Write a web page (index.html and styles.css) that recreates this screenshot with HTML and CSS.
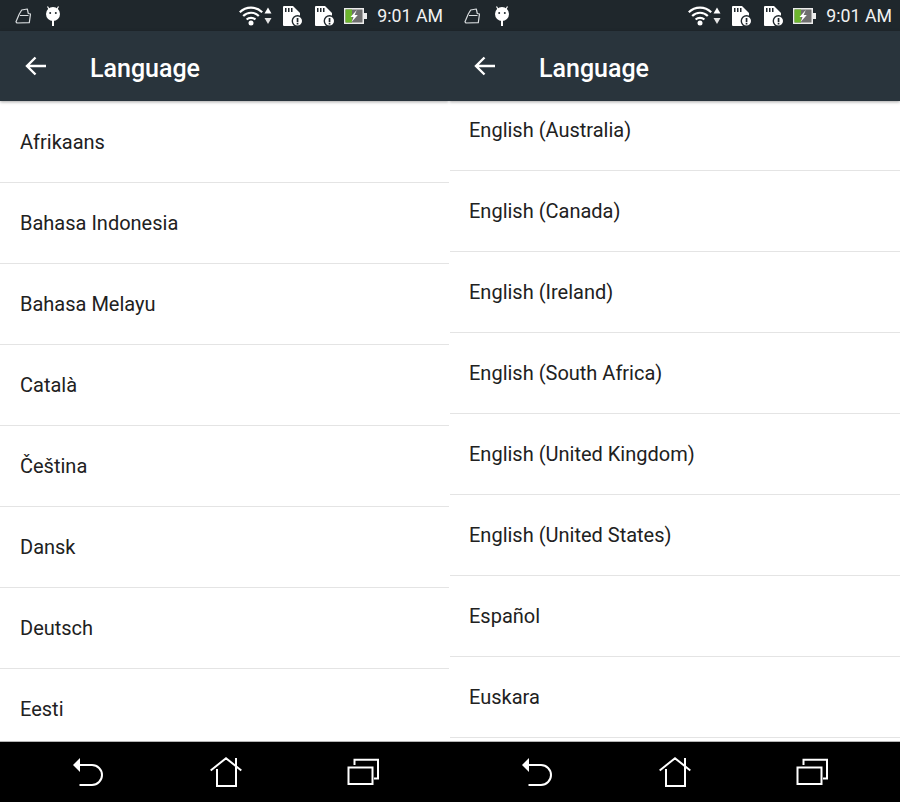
FILE: index.html
```html
<!DOCTYPE html>
<html lang="en">
<head>
    <meta charset="UTF-8">
    <meta name="viewport" content="width=device-width, initial-scale=1.0">
    <title>Language</title>
    <link rel="stylesheet" href="styles.css">
</head>

<body>
    <svg class="sprites" xmlns="http://www.w3.org/2000/svg">
        <symbol id="i-bag" viewBox="0 0 16 16">
            <path d="M1 13.8 4.3 6 6.7 2 12.3 1 13.3 5.5 15.5 6 14.3 14.7 2 15Z M5 7.5H13.5" fill="none" stroke="#d8dcde" stroke-width="1.2" stroke-linejoin="round"/>
        </symbol>
        <symbol id="i-android" viewBox="0 0 16 22">
            <path d="M2.5 1.5 4.5 5M13.5 1.5 11.5 5" stroke="#fff" stroke-width="1.2"/>
            <circle cx="8" cy="9" r="7" fill="#fff"/>
            <circle cx="5.2" cy="8" r="1" fill="#1f272c"/>
            <circle cx="10.8" cy="8" r="1" fill="#1f272c"/>
            <rect x="7" y="15" width="2" height="6" fill="#fff"/>
        </symbol>
        <symbol id="i-wifi" viewBox="0 0 24 22">
            <g fill="none" stroke="#fff" stroke-width="2.2">
                <path d="M.8 7.2A16 16 0 0 1 23.2 7.2"/>
                <path d="M4.2 11A11 11 0 0 1 19.8 11"/>
                <path d="M7.6 14.5A6.5 6.5 0 0 1 16.4 14.5"/>
            </g>
            <circle cx="12" cy="18" r="2.5" fill="#fff"/>
        </symbol>
        <symbol id="i-updown" viewBox="0 0 8 18">
            <path d="M4 .5 7.5 6.5H.5Z" fill="#fff"/>
            <path d="M.5 11H7.5L4 17Z" fill="#e4e4e4"/>
        </symbol>
        <symbol id="i-sd" viewBox="0 0 20 20">
            <path d="M0 1Q0 0 1 0H10L17 7V20H1Q0 20 0 19Z" fill="#fff"/>
            <path d="M2 2h1.5v4H2zM5 2h1.5v4H5zM8 2h1.5v4H8z" fill="#1f272c"/>
            <circle cx="14.5" cy="15" r="5.2" fill="#fff" stroke="#1f272c" stroke-width="1.4"/>
            <path d="M13.7 12h1.7v4h-1.7zM13.7 16.8h1.7v1.6h-1.7z" fill="#1f272c"/>
        </symbol>
        <symbol id="i-battery" viewBox="0 0 24 16">
            <rect x=".75" y=".75" width="18.5" height="14.5" fill="#6f6f6f" stroke="#ececec" stroke-width="1.5"/>
            <rect x="1.5" y="1.5" width="6.5" height="13" fill="#6cb52d"/>
            <rect x="20" y="5" width="3" height="6" fill="#ececec"/>
            <path d="M12.8 2 6.5 9H9.6L7.6 14 13.8 7H10.6Z" fill="#fff"/>
        </symbol>
        <symbol id="i-arrow" viewBox="0 0 24 22">
            <path d="M22 11H3M11.5 2.5 3 11 11.5 19.5" fill="none" stroke="#fff" stroke-width="2.4"/>
        </symbol>
        <symbol id="i-back" viewBox="0 0 32 32">
            <path d="M1 9 8 2V16Z" fill="#fff"/>
            <path d="M8 9H20A10 10 0 0 1 20 29H7.5" fill="none" stroke="#fff" stroke-width="2"/>
        </symbol>
        <symbol id="i-home" viewBox="0 0 32 32">
            <path d="M.7 14.5 16 2.2 31.3 14.5M26 2V10M7 13V30H26V11" fill="none" stroke="#fff" stroke-width="2"/>
        </symbol>
        <symbol id="i-recents" viewBox="0 0 32 32">
            <rect x="1.5" y="11.5" width="24" height="16.5" fill="none" stroke="#fff" stroke-width="2"/>
            <path d="M7.5 9V3.8H31V22.5H27" fill="none" stroke="#fff" stroke-width="2"/>
        </symbol>
    </svg>

    <div class="screens">
        <div class="phone phone-left">
            <div class="status">
                <div class="status-left">
                    <svg class="ic-16"><use href="#i-bag"/></svg>
                    <svg class="ic-android"><use href="#i-android"/></svg>
                </div>
                <div class="status-right">
                    <svg class="ic-wifi"><use href="#i-wifi"/></svg>
                    <svg class="ic-updown"><use href="#i-updown"/></svg>
                    <svg class="ic-sd"><use href="#i-sd"/></svg>
                    <svg class="ic-sd ic-sd2"><use href="#i-sd"/></svg>
                    <svg class="ic-battery"><use href="#i-battery"/></svg>
                    <span class="time">9:01 AM</span>
                </div>
            </div>
            <div class="header">
                <svg class="ic-arrow"><use href="#i-arrow"/></svg>
                <h1>Language</h1>
            </div>
            <div class="content">
                <ul class="list">
                    <li>Afrikaans</li>
                    <li>Bahasa Indonesia</li>
                    <li>Bahasa Melayu</li>
                    <li>Català</li>
                    <li>Čeština</li>
                    <li>Dansk</li>
                    <li>Deutsch</li>
                    <li>Eesti</li>
                </ul>
            </div>
            <div class="nav">
                <svg class="ic-nav"><use href="#i-back"/></svg>
                <svg class="ic-nav"><use href="#i-home"/></svg>
                <svg class="ic-nav"><use href="#i-recents"/></svg>
            </div>
        </div>

        <div class="phone phone-right">
            <div class="status">
                <div class="status-left">
                    <svg class="ic-16"><use href="#i-bag"/></svg>
                    <svg class="ic-android"><use href="#i-android"/></svg>
                </div>
                <div class="status-right">
                    <svg class="ic-wifi"><use href="#i-wifi"/></svg>
                    <svg class="ic-updown"><use href="#i-updown"/></svg>
                    <svg class="ic-sd"><use href="#i-sd"/></svg>
                    <svg class="ic-sd ic-sd2"><use href="#i-sd"/></svg>
                    <svg class="ic-battery"><use href="#i-battery"/></svg>
                    <span class="time">9:01 AM</span>
                </div>
            </div>
            <div class="header">
                <svg class="ic-arrow"><use href="#i-arrow"/></svg>
                <h1>Language</h1>
            </div>
            <div class="content">
                <ul class="list list-scrolled">
                    <li>English (Australia)</li>
                    <li>English (Canada)</li>
                    <li>English (Ireland)</li>
                    <li>English (South Africa)</li>
                    <li>English (United Kingdom)</li>
                    <li>English (United States)</li>
                    <li>Español</li>
                    <li>Euskara</li>
                </ul>
            </div>
            <div class="nav">
                <svg class="ic-nav"><use href="#i-back"/></svg>
                <svg class="ic-nav"><use href="#i-home"/></svg>
                <svg class="ic-nav"><use href="#i-recents"/></svg>
            </div>
        </div>
    </div>
</body>
</html>
```

FILE: styles.css
```css
body {
    font-family: 'Roboto', sans-serif;
    background-color: white;
    margin: 0;
    overflow: hidden;
}

.sprites {
    display: none;
}

.screens {
    display: grid;
    grid-template-columns: 449px 451px;
    height: 802px;
}

.phone {
    display: flex;
    flex-direction: column;
    height: 802px;
    overflow: hidden;
}

/* status bar */
.status {
    display: flex;
    justify-content: space-between;
    align-items: center;
    height: 31px;
    padding: 0 6px 0 15px;
    background: #1f272c;
    flex-shrink: 0;
}

.phone-right .status {
    padding-right: 8px;
}

.status-left,
.status-right {
    display: flex;
    align-items: center;
}

.ic-16 {
    width: 16px;
    height: 16px;
    margin-top: 1px;
}

.ic-android {
    width: 16px;
    height: 22px;
    margin-left: 14px;
    margin-top: 1px;
}

.ic-wifi {
    width: 24px;
    height: 22px;
}

.ic-updown {
    width: 8px;
    height: 18px;
    margin-left: 1px;
}

.ic-sd {
    width: 20px;
    height: 20px;
    margin-left: 11px;
}

.ic-sd2 {
    margin-left: 12px;
}

.ic-battery {
    width: 24px;
    height: 16px;
    margin-left: 9px;
}

.time {
    margin-left: 9px;
    color: #f2f2f2;
    font-size: 17.75px;
}

/* title bar */
.header {
    display: flex;
    align-items: center;
    height: 70px;
    padding-left: 24px;
    background: #29343c;
    box-shadow: 0 1px 3px rgba(0, 0, 0, 0.35);
    position: relative;
    z-index: 1;
    flex-shrink: 0;
}

.ic-arrow {
    width: 24px;
    height: 22px;
    margin-bottom: 1px;
}

.header h1 {
    margin: 4px 0 0 42px;
    color: white;
    font-size: 25px;
    font-weight: 500;
}

/* list */
.content {
    flex: 1;
    overflow: hidden;
    padding-top: 1px;
    background: white;
}

.list {
    list-style: none;
    margin: 0;
    padding: 0;
}

.list-scrolled {
    margin-top: -12px;
    margin-left: 1px;
}

.list li {
    display: flex;
    align-items: center;
    height: 80px;
    padding-left: 20px;
    border-bottom: 1px solid #e4e4e4;
    color: #212121;
    font-size: 20px;
}

.list-scrolled li {
    padding-left: 19px;
}

/* bottom navigation */
.nav {
    display: flex;
    justify-content: space-between;
    align-items: center;
    height: 60px;
    padding: 0 70px 0 72px;
    background: black;
    border-top: 1px solid #b5b5b5;
    flex-shrink: 0;
}

.phone-right .nav {
    padding-right: 72px;
}

.ic-nav {
    width: 32px;
    height: 32px;
}
```
